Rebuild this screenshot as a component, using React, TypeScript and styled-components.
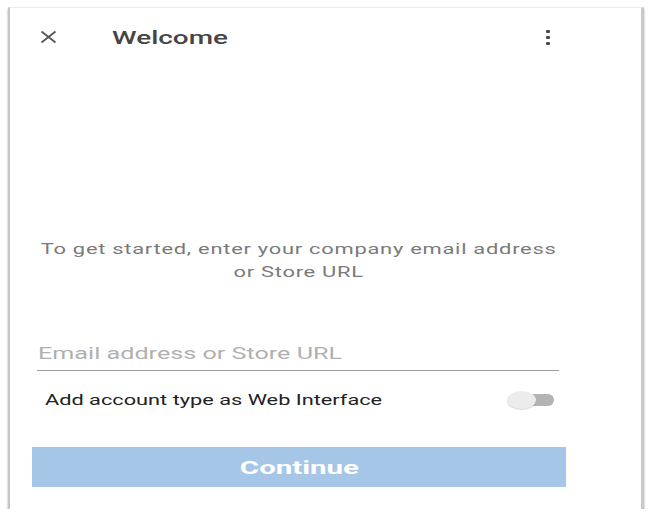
import React from "react";
import styled, { createGlobalStyle } from "styled-components";

const Global = createGlobalStyle`
  html, body { margin: 0; padding: 0; background: #fff; }
  body { font-family: Roboto, "Liberation Sans", Arial, sans-serif; }
`;

const Frame = styled.div`
  box-sizing: border-box;
  margin: 7px 0 0 8px;
  width: 636px;
  height: 502px;
  background: #fff;
  border-top: 1px solid #ececec;
  border-left: 2px solid #c6c6c6;
  border-right: 3px solid #c9c9c9;
  box-shadow: 0 2px 2px rgba(0, 0, 0, 0.35);
  display: flex;
  flex-direction: column;
`;

const Stretch = styled.span<{ $scale: number; $origin?: string }>`
  display: inline-block;
  white-space: nowrap;
  transform: scaleX(${(p) => p.$scale});
  transform-origin: ${(p) => p.$origin ?? "left"} center;
`;

const Header = styled.header`
  height: 58px;
  display: flex;
  align-items: center;
  padding-left: 30px;
`;

const IconSlot = styled.div`
  width: 72px;
  display: flex;
  align-items: center;
  color: #555;
`;

const Title = styled.h1`
  flex: 1;
  margin: 0;
  font-size: 19px;
  font-weight: 500;
  color: #454545;
`;

const Kebab = styled.div`
  width: 4px;
  margin-right: 91px;
  display: flex;
  flex-direction: column;
  gap: 3px;
`;

const Dot = styled.span`
  width: 4px;
  height: 3px;
  border-radius: 1px;
  background: #4a4a4a;
`;

const Body = styled.main`
  width: 534px;
  margin-left: 22px;
  display: flex;
  flex-direction: column;
`;

const Intro = styled.p`
  margin: 172px 0 0;
  text-align: center;
  font-size: 15px;
  line-height: 23px;
  letter-spacing: 0.5px;
  color: #7a7a7a;
`;

const Field = styled.div`
  margin: 57px 7px 0 5px;
  padding: 0 0 5px 1px;
  border-bottom: 1px solid #9e9e9e;
  font-size: 17px;
  line-height: 24px;
  color: #b0b0b0;
`;

const ToggleRow = styled.div`
  margin-top: 14px;
  height: 30px;
  display: flex;
  align-items: center;
  justify-content: space-between;
  padding: 0 12px 0 13px;
`;

const ToggleLabel = styled.span`
  font-size: 15px;
  color: #222;
`;

const Switch = styled.div`
  position: relative;
  width: 47px;
  height: 18px;
  display: flex;
  align-items: center;
  justify-content: flex-end;
`;

const Track = styled.span`
  width: 26px;
  height: 12px;
  border-radius: 6px;
  background: #b3b3b3;
`;

const Thumb = styled.span`
  position: absolute;
  left: 0;
  top: 0;
  width: 29px;
  height: 18px;
  border-radius: 50%;
  background: #ececec;
  box-shadow: 0 1px 1px rgba(0, 0, 0, 0.15);
`;

const Button = styled.button`
  margin-top: 32px;
  height: 40px;
  border: none;
  background: #a6c6e8;
  color: #fff;
  font-family: inherit;
  font-size: 19px;
  font-weight: 700;
`;

export default function App() {
  return (
    <>
      <Global />
      <Frame>
        <Header>
          <IconSlot>
            <svg width="17" height="14" viewBox="0 0 17 14">
              <path d="M1.5 1.5 L15.5 12.5 M15.5 1.5 L1.5 12.5" stroke="currentColor" strokeWidth="1.8" fill="none" />
            </svg>
          </IconSlot>
          <Title>
            <Stretch $scale={1.47}>Welcome</Stretch>
          </Title>
          <Kebab>
            <Dot />
            <Dot />
            <Dot />
          </Kebab>
        </Header>
        <Body>
          <Intro>
            <Stretch $scale={1.46} $origin="center">
              To get started, enter your company email address
            </Stretch>
            <br />
            <Stretch $scale={1.46} $origin="center">
              or Store URL
            </Stretch>
          </Intro>
          <Field>
            <Stretch $scale={1.48}>Email address or Store URL</Stretch>
          </Field>
          <ToggleRow>
            <ToggleLabel>
              <Stretch $scale={1.45}>Add account type as Web Interface</Stretch>
            </ToggleLabel>
            <Switch>
              <Track />
              <Thumb />
            </Switch>
          </ToggleRow>
          <Button>
            <Stretch $scale={1.55} $origin="center">Continue</Stretch>
          </Button>
        </Body>
      </Frame>
    </>
  );
}
